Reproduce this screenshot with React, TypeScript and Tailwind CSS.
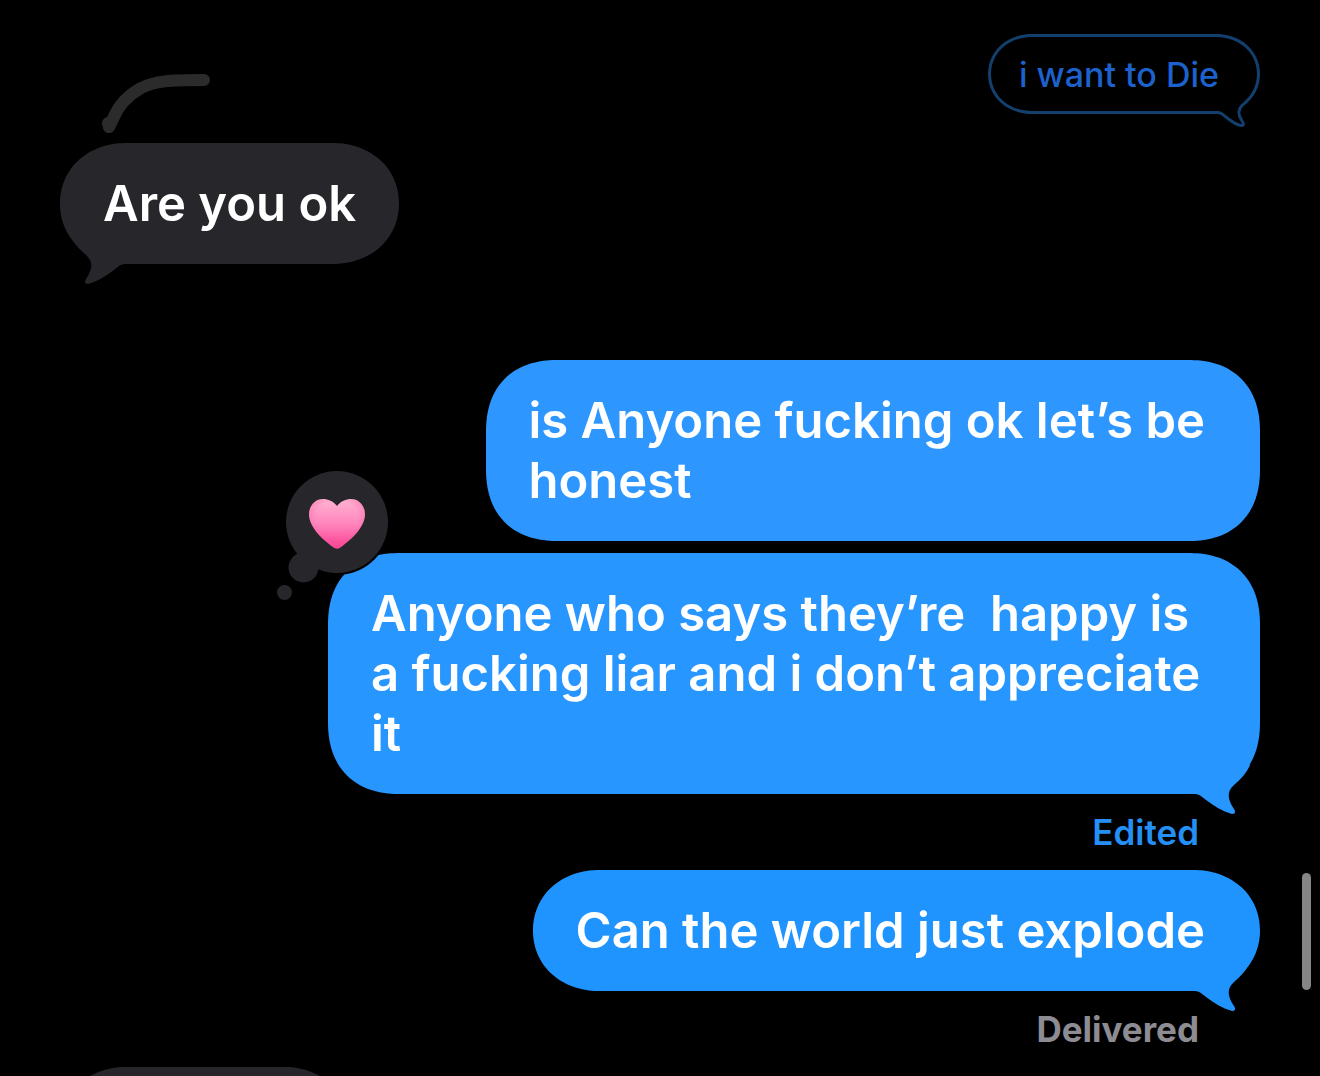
import { FC, ReactNode } from 'react';
import clsx from 'clsx';

interface BubbleProps {
  text: string;
  color: string;
  side: 'left' | 'right';
  width?: string;
  tail?: boolean;
  children?: ReactNode;
}

const Tail: FC<{ side: 'left' | 'right' }> = ({ side }) => (
  <svg
    viewBox="0 0 66 58"
    className={clsx(
      'absolute -bottom-5 h-[58px] w-[66px]',
      side === 'right' ? 'right-0' : 'left-0 -scale-x-100'
    )}
    fill="currentColor"
    aria-hidden="true"
  >
    <path d="M0 38C5 38 7 40 12 44C20 50 28 55 38 58C41 58 42 56 40 53C34 44 32 36 40 29C46 24 52 18 56 9L20 0L0 0Z" />
  </svg>
);

const Bubble: FC<BubbleProps> = ({ text, color, side, width = 'w-fit', tail, children }) => {
  const single = !text.includes('\n');

  return (
    <div
      className={clsx(
        'relative pt-[31px] pb-[30px]',
        single
          ? 'rounded-[66px/60px] [corner-shape:superellipse(1.05)]'
          : 'rounded-[72px] [corner-shape:superellipse(1.2)]',
        side === 'right' ? 'self-end pl-[43px] pr-[55px]' : 'self-start px-[43px]',
        width,
        color
      )}
    >
      {tail && <Tail side={side} />}
      <p className="relative whitespace-pre text-[49px] leading-[60px] font-semibold text-white">
        {text}
      </p>
      {children}
    </div>
  );
};

const QuotedBubble: FC<{ text: string }> = ({ text }) => (
  <div className="relative w-fit self-end rounded-[44px/40px] border-3 border-[#133f6d] pt-[18px] pb-4 pl-[28px] pr-[38px] [corner-shape:superellipse(1.05)]">
    <p className="text-[34px] leading-[40px] font-medium text-[#1d62cc]">{text}</p>
    <svg
      viewBox="0 0 44 30"
      className="absolute right-0 -bottom-[18px] h-[30px] w-[44px]"
      fill="none"
      aria-hidden="true"
    >
      <path
        d="M4 13.5H5C9 13.5 11 17 17 21C21 24 25 26 28 26.5C31 27 31 25 29 22C25 16 24.5 11 29 6.5L34 2L26 0L5 8Z"
        fill="black"
      />
      <path
        d="M3 13.5H5C9 13.5 11 17 17 21C21 24 25 26 28 26.5C31 27 31 25 29 22C25 16 24.5 11 29 6.5L34 2"
        stroke="#133f6d"
        strokeWidth="3"
      />
    </svg>
  </div>
);

const HeartReaction: FC = () => (
  <svg
    viewBox="0 0 122 138"
    className="absolute -top-[85px] -left-[58px] h-[138px] w-[122px]"
    role="img"
    aria-label="Heart reaction"
  >
    <defs>
      <linearGradient id="heart" x1="0" y1="0" x2="0" y2="1">
        <stop offset="0" stopColor="#ffb3d2" />
        <stop offset="0.5" stopColor="#ff86bd" />
        <stop offset="1" stopColor="#fb3f92" />
      </linearGradient>
      <radialGradient id="shade" cx="0.5" cy="0.4" r="0.62">
        <stop offset="0.6" stopColor="#f4569b" stopOpacity="0" />
        <stop offset="1" stopColor="#f4569b" stopOpacity="0.55" />
      </radialGradient>
    </defs>
    <circle cx="67" cy="54" r="53" fill="black" />
    <g fill="#27262b">
      <circle cx="67" cy="54" r="51" />
      <circle cx="33.5" cy="99.5" r="15" />
      <circle cx="14.5" cy="124.5" r="7.5" />
    </g>
    <g transform="translate(39 31)">
      <path
        d="M28 7C32 2 37 0 42 0C50 0 56 7 56 15C56 28 43 40 32 48C29 50 27 50 24 48C13 40 0 28 0 15C0 7 6 0 14 0C19 0 24 2 28 7Z"
        fill="url(#heart)"
      />
      <path
        d="M28 7C32 2 37 0 42 0C50 0 56 7 56 15C56 28 43 40 32 48C29 50 27 50 24 48C13 40 0 28 0 15C0 7 6 0 14 0C19 0 24 2 28 7Z"
        fill="url(#shade)"
      />
    </g>
  </svg>
);

const Status: FC<{ label: string; className: string }> = ({ label, className }) => (
  <p className={clsx('self-end pr-[61px] text-[35px] leading-[76px]', className)}>{label}</p>
);

export default function App() {
  return (
    <main className="relative h-screen overflow-hidden bg-black font-['Inter',sans-serif]">
      <div className="flex flex-col px-[60px] pt-[34px]">
        <QuotedBubble text="i want to Die" />

        <div className="relative mt-[29px] mb-24 flex flex-col">
          <svg
            viewBox="0 0 110 62"
            className="absolute -top-[71px] left-[41px] h-[62px] w-[110px]"
            fill="none"
            stroke="#2b2b2b"
            strokeWidth="12"
            strokeLinecap="round"
            strokeLinejoin="round"
            aria-hidden="true"
          >
            <path d="M103 8C68 8 54 9 40 16C26 24 17 34 12 47L8 55" />
            <path d="M7 51L8 55" />
          </svg>
          <Bubble side="left" color="bg-[#27262b] text-[#27262b]" text="Are you ok" tail />
        </div>

        <Bubble
          side="right"
          color="bg-[#2d97ff] text-[#2d97ff]"
          text={'is Anyone fucking ok let’s be\nhonest'}
        />
        <div className="mt-3 flex flex-col">
          <Bubble
            side="right"
            width="w-[932px]"
            color="bg-[#2896ff] text-[#2896ff]"
            text={'Anyone who says they’re  happy is\na fucking liar and i don’t appreciate\nit'}
            tail
          >
            <HeartReaction />
          </Bubble>
        </div>
        <Status label="Edited" className="font-semibold text-[#2490f5]" />

        <Bubble
          side="right"
          color="bg-[#1f94ff] text-[#1f94ff]"
          text="Can the world just explode"
          tail
        />
        <Status label="Delivered" className="font-bold text-[#8d8c93]" />

        <div className="h-[121px] w-[290px] rounded-[66px/60px] bg-[#27262b] [corner-shape:superellipse(1.05)]" />
      </div>

      <div className="absolute right-[9px] bottom-[86px] h-[117px] w-[9px] rounded-full bg-[#858585]" />
    </main>
  );
}
